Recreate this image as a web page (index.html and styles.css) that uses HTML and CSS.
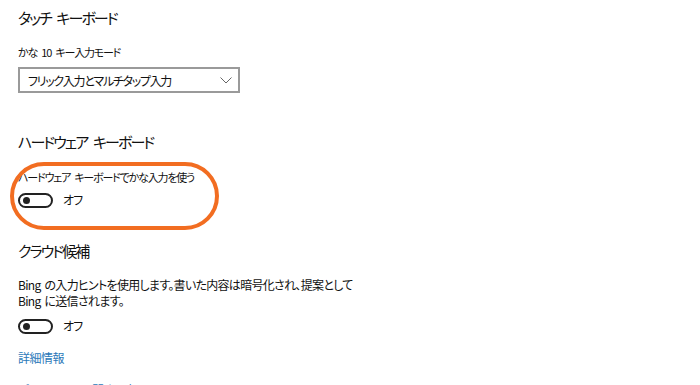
FILE: index.html
```html
<!DOCTYPE html>
<html lang="ja">
<head>
  <meta charset="UTF-8">
  <meta name="viewport" content="width=device-width, initial-scale=1.0">
  <title>入力</title>
  <link rel="stylesheet" href="styles.css">
</head>
<body>
  <div class="page">
    <div class="section">
      <div class="heading">タッチ キーボード</div>
      <div class="label">かな 10 キー入力モード</div>
      <div class="select-box">
        <span>フリック入力とマルチタップ入力</span>
        <svg class="chevron" width="12" height="7" viewBox="0 0 12 7">
          <path d="M0.5 0.5 L6 6 L11.5 0.5" fill="none" stroke="#666" stroke-width="1"/>
        </svg>
      </div>
    </div>

    <div class="section hardware">
      <div class="heading">ハードウェア キーボード</div>
      <div class="label">ハードウェア キーボードでかな入力を使う</div>
      <div class="toggle-row">
        <span class="toggle"><span class="knob"></span></span>
        <span class="state">オフ</span>
      </div>
      <div class="mark"></div>
    </div>

    <div class="section cloud">
      <div class="heading">クラウド候補</div>
      <p class="desc">Bing の入力ヒントを使用します。書いた内容は暗号化され、提案として<br>Bing に送信されます。</p>
      <div class="toggle-row">
        <span class="toggle"><span class="knob"></span></span>
        <span class="state">オフ</span>
      </div>
      <a class="link" href="#">詳細情報</a>
      <a class="link" href="#">プライバシーに関する声明</a>
    </div>
  </div>
</body>
</html>
```

FILE: styles.css
```css
/* General reset */
* {
  margin: 0;
  padding: 0;
  box-sizing: border-box;
}

body {
  background-color: #fff;
  color: #111;
  font-family: "Noto Sans CJK JP", "Noto Sans", sans-serif;
  font-feature-settings: "palt";
  overflow: hidden;
}

.page {
  padding: 6px 0 0 18px;
  display: flex;
  flex-direction: column;
}

.section {
  display: flex;
  flex-direction: column;
  align-items: flex-start;
}

.heading {
  font-size: 15px;
  line-height: 24px;
  letter-spacing: -1.9px;
  word-spacing: 4px;
  color: #111;
}

.desc,
.state,
.link,
.select-box {
  font-size: 12px;
}

.label {
  font-size: 11px;
  line-height: 18px;
  margin-top: 13px;
  letter-spacing: -1.2px;
  word-spacing: 3px;
}

/* Dropdown */
.select-box {
  margin-top: 6px;
  width: 222px;
  height: 26px;
  border: 2px solid #9a9a9a;
  display: flex;
  align-items: center;
  justify-content: space-between;
  padding: 0 6px 0 8px;
  letter-spacing: -1.3px;
}

.hardware {
  margin-top: 37px;
  position: relative;
}

.hardware .label {
  margin-top: 14px;
}

/* Toggle */
.toggle-row {
  display: flex;
  align-items: center;
  gap: 10px;
  margin-top: 6px;
}

.toggle {
  width: 35px;
  height: 15px;
  border: 2px solid #222;
  border-radius: 8px;
  display: flex;
  align-items: center;
  padding-left: 3px;
}

.knob {
  width: 7px;
  height: 7px;
  border-radius: 50%;
  background-color: #222;
}

.state {
  line-height: 16px;
  letter-spacing: -1px;
}

/* Orange annotation drawn over the setting */
.mark {
  position: absolute;
  left: -8px;
  top: 32px;
  width: 209px;
  height: 68px;
  border: 4px solid #f26d21;
  border-radius: 34px;
}

.cloud {
  margin-top: 31px;
}

.desc {
  line-height: 16px;
  margin-top: 14px;
  letter-spacing: -0.7px;
  word-spacing: 2px;
}

.cloud .toggle-row {
  margin-top: 9px;
}

.link {
  line-height: 18px;
  color: #2b79b9;
  text-decoration: none;
  margin-top: 15px;
  letter-spacing: -0.5px;
}

.link + .link {
  margin-top: 14px;
}
```
